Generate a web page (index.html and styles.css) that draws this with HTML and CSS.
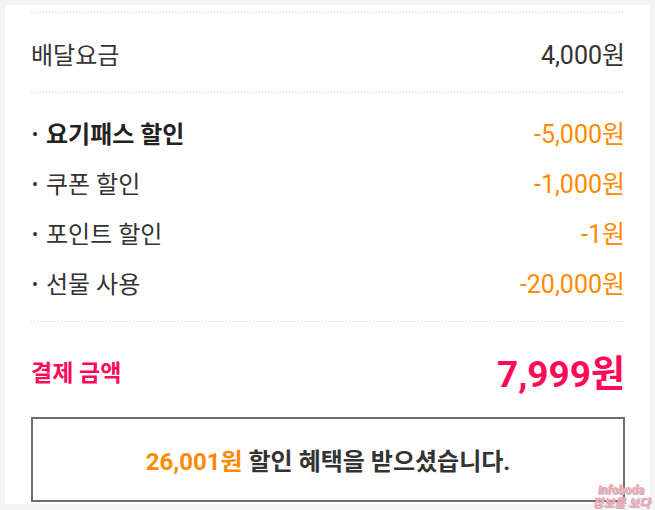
FILE: index.html
```html
<!DOCTYPE html>
<html lang="ko">
<head>
<meta charset="utf-8">
<link rel="stylesheet" href="styles.css">
</head>
<body>
<div class="card">
  <div class="section fee">
    <div class="row">
      <span class="label">배달요금</span>
      <span class="value">4,000원</span>
    </div>
  </div>
  <div class="section discounts">
    <div class="row">
      <span class="label bullet strong">요기패스 할인</span>
      <span class="value orange">-5,000원</span>
    </div>
    <div class="row">
      <span class="label bullet">쿠폰 할인</span>
      <span class="value orange">-1,000원</span>
    </div>
    <div class="row">
      <span class="label bullet">포인트 할인</span>
      <span class="value orange">-1원</span>
    </div>
    <div class="row">
      <span class="label bullet">선물 사용</span>
      <span class="value orange">-20,000원</span>
    </div>
  </div>
  <div class="section total">
    <div class="row">
      <span class="total-label">결제 금액</span>
      <span class="total-value">7,999원</span>
    </div>
  </div>
  <div class="benefit">
    <p class="benefit-text"><span class="orange">26,001원</span> 할인 혜택을 받으셨습니다.</p>
  </div>
  <div class="watermark"><span class="wm-en">Infoboda</span><span class="wm-ko">정보를 보다</span></div>
</div>
</body>
</html>
```
FILE: styles.css
```css
html, body {
  margin: 0;
  padding: 0;
}
body {
  background: #f4f4f4;
  font-family: Roboto, "Noto Sans CJK KR", sans-serif;
  color: #333;
  padding: 5px 5px 6px 5px;
  width: 655px;
  height: 510px;
  box-sizing: border-box;
}
.card {
  position: relative;
  background: #fff;
  height: 499px;
  padding: 7px 25px 0 26px;
  box-sizing: border-box;
}
.section {
  background-image: repeating-linear-gradient(to right, #d2d2d2 0 1px, transparent 1px 3px);
  background-size: 100% 1px;
  background-repeat: no-repeat;
  background-position: left top;
}
.fee {
  padding: 16px 0 14px;
}
.discounts {
  padding: 15px 0 14px;
}
.total {
  padding: 30px 0 0;
}
.row {
  display: flex;
  justify-content: space-between;
  align-items: center;
  height: 50px;
  font-size: 24px;
}
.total .row {
  height: 40px;
}
.label {
  color: #333;
}
.bullet::before {
  content: "•";
  display: inline-block;
  width: 14px;
  margin-left: 1px;
  font-size: 18px;
  vertical-align: 2px;
  font-weight: normal;
}
.strong {
  font-weight: bold;
  color: #222;
}
.value {
  color: #333;
  font-size: 25px;
}
.orange {
  color: #ff8a00;
}
.total-label {
  color: #ff0a5a;
  font-weight: bold;
  font-size: 23px;
}
.total-value {
  color: #ff0a5a;
  font-weight: bold;
  font-size: 37px;
}
.benefit {
  margin-top: 26px;
  height: 85px;
  border: 2px solid #6e6e6e;
  box-sizing: border-box;
  display: flex;
  align-items: center;
  justify-content: center;
}
.benefit-text {
  margin: 0;
  font-size: 24px;
  font-weight: bold;
  color: #333;
}
.watermark {
  position: absolute;
  right: 0;
  bottom: -6px;
  display: flex;
  flex-direction: column;
  align-items: center;
  line-height: 13px;
  font-style: italic;
  font-weight: bold;
  color: #f7a4b4;
  text-shadow: 1px 1px 0 #b8b8b8;
}
.wm-en {
  font-size: 12px;
}
.wm-ko {
  font-size: 12px;
}
```
